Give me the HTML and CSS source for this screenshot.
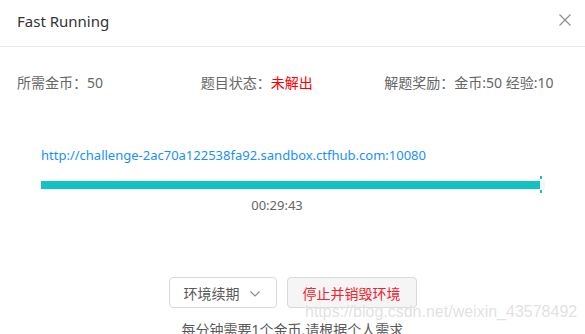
FILE: index.html
```html
<!DOCTYPE html>
<html lang="zh-CN">
<head>
<meta charset="utf-8">
<title>Fast Running</title>
<link rel="stylesheet" href="styles.css">
</head>
<body>
<div class="modal">
  <div class="header">
    <div class="title">Fast Running</div>
    <svg class="close" width="12" height="12" viewBox="0 0 12 12"><path d="M0.5 0.5 L11.5 11.5 M11.5 0.5 L0.5 11.5" stroke="#8c8c8c" stroke-width="1.1" fill="none"/></svg>
  </div>
  <div class="body">
    <div class="info">
      <div>所需金币：50</div>
      <div>题目状态：<span class="red">未解出</span></div>
      <div>解题奖励：金币:50 经验:10</div>
    </div>
    <div class="inner">
      <div class="url">http://challenge-2ac70a122538fa92.sandbox.ctfhub.com:10080</div>
      <div class="progress">
        <div class="track"><div class="fill" style="width:499px"></div></div>
        <span class="tick tick-top"></span>
        <span class="tick tick-bottom"></span>
      </div>
      <div class="time">00:29:43</div>
    </div>
    <div class="actions">
      <button class="btn btn-renew">环境续期<svg class="chev" width="10" height="6" viewBox="0 0 10 6"><path d="M0.5 0.5 L5 5 L9.5 0.5" stroke="#8c8c8c" stroke-width="1.1" fill="none"/></svg></button>
      <button class="btn btn-stop">停止并销毁环境</button>
    </div>
    <div class="note">每分钟需要1个金币,请根据个人需求</div>
  </div>
  <div class="watermark">https://blog.csdn.net/weixin_43578492</div>
</div>
</body>
</html>
```
FILE: styles.css
```css
html, body {
  margin: 0;
  padding: 0;
  background: #fff;
}
body {
  width: 585px;
  height: 334px;
  overflow: hidden;
  font-family: "Noto Sans", "Noto Sans CJK SC", sans-serif;
  font-size: 14px;
  color: #666;
}
.modal {
  position: relative;
  width: 585px;
  height: 334px;
}
.header {
  height: 46px;
  border-bottom: 1px solid #e8e8e8;
  display: flex;
  align-items: center;
  justify-content: space-between;
  padding: 0 14px 0 17px;
}
.title {
  font-size: 15px;
  color: #333;
  line-height: 22px;
  margin-top: -5px;
}
.close {
  margin-top: -6px;
}
.body {
  padding: 0 17px;
}
.info {
  display: grid;
  grid-template-columns: repeat(3, 1fr);
  margin-top: 25px;
  line-height: 22px;
  white-space: nowrap;
}
.red {
  color: #f00;
}
.inner {
  margin: 0 23px 0 24px;
}
.url {
  margin-top: 50px;
  line-height: 22px;
  font-size: 13px;
  color: #1890ff;
  white-space: nowrap;
}
.progress {
  position: relative;
  margin-top: 15px;
  height: 8px;
}
.track {
  height: 8px;
  background: #f5f5f5;
}
.fill {
  height: 8px;
  background: #13c2c2;
}
.tick {
  position: absolute;
  left: 499px;
  width: 2px;
  height: 3px;
  background: #13c2c2;
}
.tick-top {
  top: -5px;
}
.tick-bottom {
  top: 9px;
}
.time {
  margin-top: 6px;
  padding-right: 32px;
  text-align: center;
  font-size: 13px;
  line-height: 20px;
  color: #666;
}
.actions {
  display: flex;
  justify-content: center;
  gap: 10px;
  margin-top: 62px;
}
.btn {
  height: 31px;
  border: 1px solid #d9d9d9;
  border-radius: 4px;
  background: #fff;
  font-family: inherit;
  font-size: 14px;
  padding: 0;
  display: flex;
  align-items: center;
  justify-content: center;
}
.btn-renew {
  width: 108px;
  color: #595959;
  padding-right: 2px;
}
.chev {
  margin-left: 10px;
  margin-top: 2px;
}
.btn-stop {
  width: 130px;
  background: #f5f5f5;
  color: #f5222d;
}
.note {
  margin-top: 11px;
  text-align: center;
  line-height: 22px;
  color: #595959;
}
.watermark {
  position: absolute;
  left: 305px;
  top: 302px;
  font-family: "Liberation Sans", Arial, sans-serif;
  font-size: 16px;
  line-height: 20px;
  color: rgba(200, 200, 200, 0.55);
  text-shadow: 0 0 1px #fff;
  white-space: nowrap;
}
```
